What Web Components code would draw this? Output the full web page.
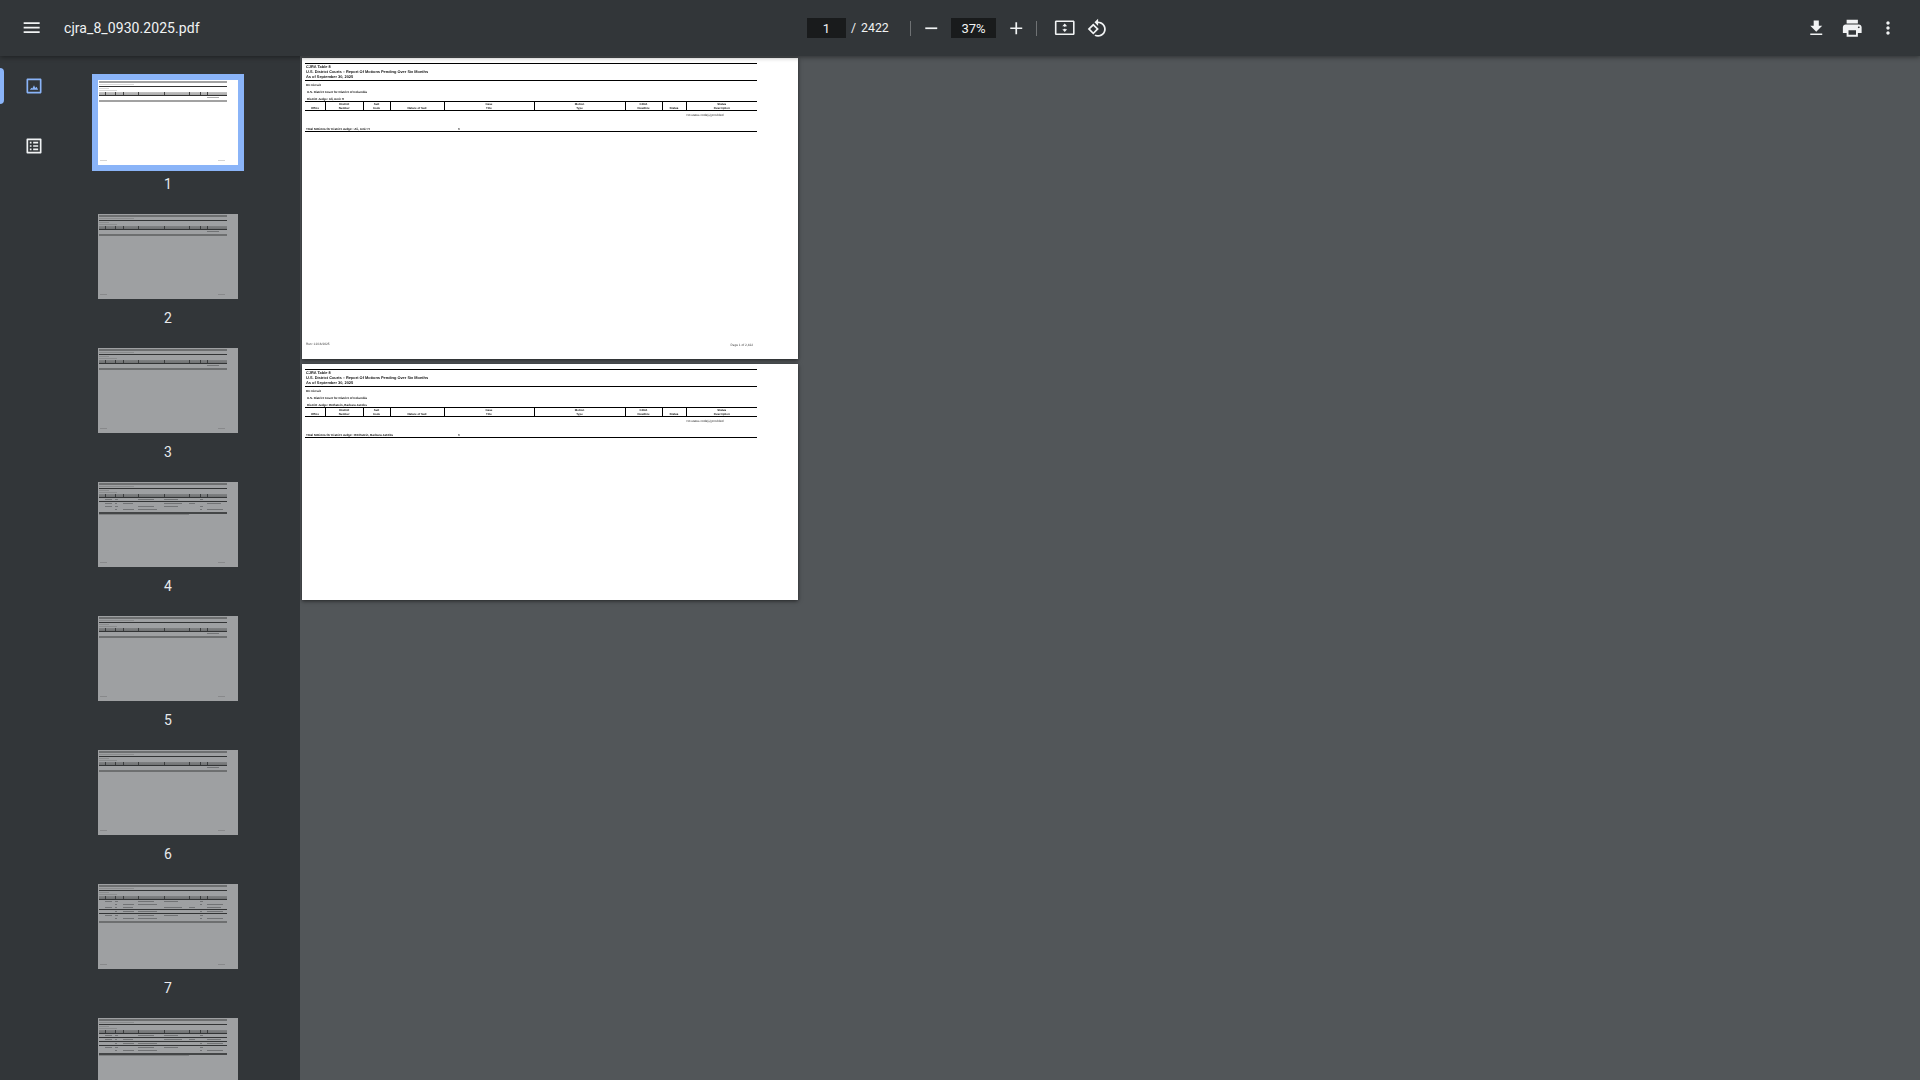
<!DOCTYPE html>
<html lang="en"><head><meta charset="utf-8"><title>cjra_8_0930.2025.pdf</title>
<style>
html,body{margin:0;padding:0;width:1920px;height:1080px;overflow:hidden;background:#525659;font-family:Roboto,"Liberation Sans",sans-serif}
</style></head>
<body>
<pv-app></pv-app>
<script>
const ICONS={
menu:'<path fill="currentColor" d="M3 18h18v-2H3v2zm0-5h18v-2H3v2zm0-7v2h18V6H3z"/>',
minus:'<path fill="currentColor" d="M19 13H5v-2h14v2z"/>',
plus:'<path fill="currentColor" d="M19 13h-6v6h-2v-6H5v-2h6V5h2v6h6v2z"/>',
fit:'<path fill="currentColor" fill-rule="evenodd" d="M2.600 3.800h18.800c.9 0 1.600.7 1.600 1.600v13.200c0 .9-.7 1.600-1.600 1.600H2.600c-.9 0-1.600-.7-1.600-1.600V5.400c0-.9.7-1.600 1.600-1.600zm.2 1.700v13h18.400v-13H2.800zM12 7.200l2.700 3h-1.900v.8h-1.600v-.8H9.300L12 7.200zm0 9.600l-2.700-3h1.900V13h1.600v.8h1.900L12 16.800z"/>',
rotate:'<path fill="currentColor" d="M7.34 6.41L.86 12.9l6.49 6.48 6.49-6.48-6.5-6.49zM3.69 12.9l3.66-3.66L11 12.9l-3.66 3.66-3.65-3.66zm15.67-6.26C17.61 4.88 15.3 4 13 4V.76L8.76 5 13 9.24V6c1.79 0 3.58.68 4.95 2.05 2.73 2.73 2.73 7.17 0 9.9C16.58 19.32 14.79 20 13 20c-.97 0-1.94-.21-2.84-.61l-1.49 1.49C10.02 21.62 11.51 22 13 22c2.3 0 4.61-.88 6.36-2.64 3.52-3.51 3.52-9.21 0-12.72z"/>',
download:'<path fill="currentColor" d="M19 9h-4V3H9v6H5l7 7 7-7zM5 18v2h14v-2H5z"/>',
print:'<path fill="currentColor" d="M19 8H5c-1.66 0-3 1.34-3 3v6h4v4h12v-4h4v-6c0-1.66-1.34-3-3-3zm-3 11H8v-5h8v5zm3-7c-.55 0-1-.45-1-1s.45-1 1-1 1 .45 1 1-.45 1-1 1zm-1-9H6v4h12V3z"/>',
more:'<path fill="currentColor" d="M12 8c1.100 0 2-.9 2-2s-.9-2-2-2-2 .9-2 2 .9 2 2 2zm0 2c-1.100 0-2 .9-2 2s.9 2 2 2 2-.9 2-2-.9-2-2-2zm0 6c-1.100 0-2 .9-2 2s.9 2 2 2 2-.9 2-2-.9-2-2-2z"/>',
image:'<path fill="currentColor" d="M19 5v14H5V5h14m.5-2h-15C3.700 3 3 3.700 3 4.500v15c0 .8.7 1.500 1.500 1.500h15c.8 0 1.500-.7 1.500-1.500v-15c0-.8-.7-1.500-1.500-1.500z"/><path fill="currentColor" d="M7 16.500L9 14l1 1 2-3.800 1.500 3.300L15 13l2 3.500z"/>',
list:'<path fill="currentColor" d="M19 5v14H5V5h14m1.100-2H3.900c-.5 0-.9.4-.9.900v16.200c0 .4.4.9.9.9h16.200c.4 0 .9-.5.9-.9V3.900c0-.5-.5-.9-.9-.9zM11 7h6v2h-6V7zm0 4h6v2h-6v-2zm0 4h6v2h-6zM7 7h2v2H7zm0 4h2v2H7zm0 4h2v2H7z"/>'
};

class PvIconButton extends HTMLElement{
  connectedCallback(){
    const size=this.getAttribute('size')||20.5, w=this.getAttribute('w')||32, h=this.getAttribute('h')||32;
    this.attachShadow({mode:'open'}).innerHTML=`<style>
      :host{display:flex;align-items:center;justify-content:center;width:${w}px;height:${h}px;flex:none;color:var(--icon-color,#f1f3f4)}
      svg{display:block;width:${size}px;height:${size}px}
    </style><svg viewBox="0 0 24 24">${ICONS[this.getAttribute('icon')]}</svg>`;
  }
}
customElements.define('pv-icon-button',PvIconButton);

class PvToolbar extends HTMLElement{
  connectedCallback(){
    this.attachShadow({mode:'open'}).innerHTML=`<style>
      :host{display:flex;align-items:center;height:56px;background:#323639;color:#f1f3f4;position:relative;z-index:3;box-shadow:0 1px 5px rgba(0,0,0,.45);font:13px Roboto,"Liberation Sans",sans-serif}
      .left{display:flex;align-items:center;width:807px;padding-left:12px;box-sizing:border-box;flex:none}
      .title{margin-left:12px;font-size:14px;font-weight:400;letter-spacing:.07px;white-space:nowrap}
      .field{height:20px;background:#191b1c;display:flex;align-items:center;justify-content:center;flex:none}
      .count{width:59px;margin-left:5px;flex:none;white-space:nowrap;font-size:12.3px;word-spacing:2px}
      .sep{width:1px;height:15px;background:rgba(255,255,255,.3);flex:none}
      .right{margin-left:auto;padding-right:14px;display:flex}
    </style>
    <div class="left"><pv-icon-button icon="menu" size="21.33" w="40"></pv-icon-button><span class="title"><slot name="title"></slot></span></div>
    <div class="field" style="width:39px">1</div>
    <span class="count">/ 2422</span>
    <span class="sep"></span>
    <pv-icon-button icon="minus" style="margin-left:4px"></pv-icon-button>
    <div class="field" style="width:45px;margin-left:4px">37%</div>
    <pv-icon-button icon="plus" style="margin-left:4px"></pv-icon-button>
    <span class="sep" style="margin-left:4px"></span>
    <pv-icon-button icon="fit" size="21.5" style="margin-left:12px"></pv-icon-button>
    <pv-icon-button icon="rotate"></pv-icon-button>
    <div class="right">
      <pv-icon-button icon="download" w="36"></pv-icon-button>
      <pv-icon-button icon="print" size="22.5" w="36"></pv-icon-button>
      <pv-icon-button icon="more" size="20" w="36"></pv-icon-button>
    </div>`;
  }
}
customElements.define('pv-toolbar',PvToolbar);

const COLS='20fr 37.5fr 27fr 54fr 90fr 91fr 37fr 24fr 71.5fr';
class PvThumb extends HTMLElement{
  connectedCallback(){
    const sel=this.hasAttribute('selected');
    const end=this.getAttribute('end');
    const rows=(this.getAttribute('rows')||'n').split('');
    const widths=[[0,70,30,0,60,55,0,45,0],[0,0,25,70,75,0,0,30,80],[0,70,25,65,0,70,50,0,70]];
    const body=rows.map((k,r)=>{
      if(k==='d')return '<div class="dark"></div>';
      if(k==='n')return '<div class="row"><i style="grid-column:9;width:60%;background:#aaa"></i></div>';
      const w=widths[r%3];
      return `<div class="row">${w.map(p=>`<i style="width:${p}%"></i>`).join('')}</div>`;
    }).join('');
    const cells=Array.from({length:9},(_,i)=>`<i${i?' class="t"':''}></i>`).join('');
    const close=end==='d'
      ?'<div class="dark" style="margin-top:1px;height:2px;background:#555"></div><div class="txt" style="width:70%;background:#c4c4c4"></div>'
      :'<div class="band" style="margin-top:1px"></div>';
    this.attachShadow({mode:'open'}).innerHTML=`<style>
      :host{display:flex;flex-direction:column;align-items:center;height:134px;flex:none}
      .page{width:140px;height:85px;box-sizing:border-box;background:#fff;padding:1px 11px 0 1px;display:flex;flex-direction:column;flex:none;
        opacity:${sel?1:.53};${sel?'box-shadow:0 0 0 6px #8ab4f8;':''}}
      .band{height:2px;background:#a2a2a2;flex:none}
      .txt{height:1px;background:#d8d8d8;flex:none}
      .darkline{height:1px;background:#333;margin-top:1px;flex:none}
      .hdr{display:grid;grid-template-columns:${COLS};height:3px;margin-top:1px;background:linear-gradient(#c4c4c4,#a8a8a8);flex:none}
      .hdr i{display:block}.hdr i.t{border-left:1px solid #444}
      .dark{height:1px;background:#333;flex:none}
      .row{display:grid;grid-template-columns:${COLS};height:3px;align-items:center;flex:none}
      .row i{display:block;height:1px;background:#aaa}
      .foot{margin-top:auto;margin-bottom:4px;display:flex;justify-content:space-between;padding:0 2px 0 1px}
      .foot i{display:block;height:1px;background:#d4d4d4;width:7px}
      .num{font-size:14px;line-height:18px;margin-top:10px;color:#e8eaed}
    </style>
    <div class="page">
      <div class="band"></div>
      <div class="txt" style="width:35px;margin-top:1px"></div>
      <div class="darkline"></div>
      <div class="txt" style="width:10px;margin-top:1px"></div>
      <div class="txt" style="width:18px;margin-top:1px"></div>
      <div class="hdr">${cells}</div>
      <div class="dark"></div>
      ${body}
      ${close}
      <div class="foot"><i></i><i></i></div>
    </div>
    <div class="num"><slot></slot></div>`;
  }
}
customElements.define('pv-thumb',PvThumb);

class PvSidebar extends HTMLElement{
  connectedCallback(){
    this.attachShadow({mode:'open'}).innerHTML=`<style>
      :host{display:flex;width:300px;height:1024px;background:#323639;overflow:hidden;flex:none;position:relative;z-index:1}
      .rail{width:68px;flex:none;display:flex;flex-direction:column;align-items:center;padding-top:12px;gap:24px}
      .tab{position:relative;width:68px;display:flex;justify-content:center}
      .tab.on::before{content:"";position:absolute;left:0;top:0;width:4px;height:36px;background:#8ab4f8;border-radius:0 4px 4px 0}
      .tab.on{--icon-color:#8ab4f8}
      .list{width:200px;flex:none;display:flex;flex-direction:column;padding-top:24px;color:#f1f3f4;font-family:Roboto,"Liberation Sans",sans-serif}
    </style>
    <div class="rail">
      <div class="tab on"><pv-icon-button icon="image" size="20" h="36" w="36"></pv-icon-button></div>
      <div class="tab"><pv-icon-button icon="list" size="20" h="36" w="36"></pv-icon-button></div>
    </div>
    <div class="list"><slot></slot></div>`;
  }
}
customElements.define('pv-sidebar',PvSidebar);

class PvPage extends HTMLElement{
  connectedCallback(){
    const judge=this.getAttribute('judge'), h=this.getAttribute('h')||301;
    const cols=[['','Office'],['District','Number'],['Suit','Code'],['','Nature of Suit'],['Case','Title'],['Motion','Type'],['CRJA','Deadline'],['','Status'],['Status','Description']];
    const foot=this.getAttribute('run')?`<div class="foot"><span>${this.getAttribute('run')}</span><span class="pg">${this.getAttribute('pg')}</span></div>`:'';
    this.attachShadow({mode:'open'}).innerHTML=`<style>
      :host{display:block;width:496px;height:${h}px;background:#fff;box-shadow:0 1px 4px rgba(0,0,0,.6);overflow:hidden;flex:none;color:#111}
      .in{height:302px;box-sizing:border-box;padding:5px 41px 13px 3px;display:flex;flex-direction:column;font:700 3.9px/5px "Liberation Sans",sans-serif;text-rendering:geometricPrecision;filter:blur(.2px)}
      .rule{height:1px;background:#000;flex:none}
      .l{height:5px;padding-left:1px;white-space:nowrap;flex:none}
      .sm{font-size:3px}
      .thead{display:grid;grid-template-columns:${COLS};height:8px;flex:none}
      .thead div{display:flex;flex-direction:column;align-items:center;line-height:4px;font-size:2.9px;font-weight:700}
      .thead div+div{border-left:1px solid #000}
      .thead span{height:4px}
      .ns{display:grid;grid-template-columns:${COLS};height:9px;align-items:center;font-weight:400;font-size:3.1px;color:#333;flex:none}
      .ns span{grid-column:9;white-space:nowrap;padding-left:1px}
      .tot{display:flex;height:5px;padding-left:1px;flex:none;font-size:3.05px;font-weight:700}
      .tot span:first-child{width:152px;white-space:nowrap}
      .foot{margin-top:auto;display:flex;justify-content:space-between;font-weight:400;font-size:3.2px;color:#444;padding:0 4px 0 1px;flex:none}
      .pg{position:relative;top:1px}
    </style>
    <div class="in">
      <div class="rule"></div>
      <div class="l">CJRA Table 8</div>
      <div class="l">U.S. District Courts – Report Of Motions Pending Over Six Months</div>
      <div class="l" style="height:6px">As of September 30, 2025</div>
      <div class="rule"></div>
      <div class="l sm" style="margin-top:2px">DC Circuit</div>
      <div class="l sm" style="margin-top:2px;padding-left:2px">U.S. District Court for District of Columbia</div>
      <div class="l sm" style="margin-top:2px;padding-left:2px">District Judge: ${judge}</div>
      <div class="rule" style="margin-top:-1px"></div>
      <div class="thead">${cols.map(c=>`<div><span>${c[0]}</span><span>${c[1]}</span></div>`).join('')}</div>
      <div class="rule"></div>
      <div class="ns"><span>No status code(s) provided</span></div>
      <div class="tot" style="margin-top:7px;margin-bottom:-1px"><span>Total Motions for District Judge : ${judge}</span><span>0</span></div>
      <div class="rule"></div>
      ${foot}
    </div>`;
  }
}
customElements.define('pv-page',PvPage);

class PvViewer extends HTMLElement{
  connectedCallback(){
    this.attachShadow({mode:'open'}).innerHTML=`<style>
      :host{display:flex;flex-direction:column;gap:5px;flex:1;min-width:0;height:1024px;box-sizing:border-box;padding:2px 0 0 2px;background:#525659;overflow:hidden}
    </style><slot></slot>`;
  }
}
customElements.define('pv-viewer',PvViewer);

class PvApp extends HTMLElement{
  connectedCallback(){
    const thumbs=[['1','n','',1],['2','n',''],['3','n',''],['4','fdfff','d'],['5','n',''],['6','n',''],['7','fffdfdff',''],['','fdfdfdff','d']];
    this.attachShadow({mode:'open'}).innerHTML=`<style>
      :host{display:flex;flex-direction:column;width:1920px;height:1080px;font-family:Roboto,"Liberation Sans",sans-serif}
      .body{display:flex;flex:1;min-height:0}
    </style>
    <pv-toolbar><span slot="title">cjra_8_0930.2025.pdf</span></pv-toolbar>
    <div class="body">
      <pv-sidebar>${thumbs.map(t=>`<pv-thumb rows="${t[1]}" end="${t[2]}"${t[3]?' selected':''}>${t[0]}</pv-thumb>`).join('')}</pv-sidebar>
      <pv-viewer>
        <pv-page judge="Ali, Amir H" run="Run: 12/16/2025" pg="Page 1 of 2,422"></pv-page>
        <pv-page judge="Rothstein, Barbara Jacobs" h="236"></pv-page>
      </pv-viewer>
    </div>`;
  }
}
customElements.define('pv-app',PvApp);
</script>
</body></html>
